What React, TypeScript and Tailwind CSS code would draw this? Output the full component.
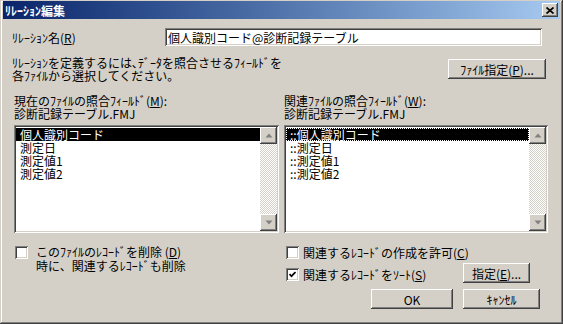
import React from "react";

const raised =
  "shadow-[inset_-1px_-1px_#404040,inset_1px_1px_#ffffff,inset_-2px_-2px_#808080,inset_2px_2px_#d4d0c8]";
const sunken =
  "shadow-[inset_1px_1px_#808080,inset_-1px_-1px_#ffffff,inset_2px_2px_#404040,inset_-2px_-2px_#d4d0c8]";

const U = ({ c }: { c: string }) => <span className="underline underline-offset-[1px]">{c}</span>;

const Btn = ({ children, className = "" }: { children: React.ReactNode; className?: string }) => (
  <button className={`flex h-[20px] items-center justify-center bg-[#d4d0c8] text-black ${raised} ${className}`}>
    {children}
  </button>
);

const CheckBox = ({ checked = false, className = "" }: { checked?: boolean; className?: string }) => (
  <div className={`flex h-[13px] w-[13px] shrink-0 items-center justify-center bg-white ${sunken} ${className}`}>
    {checked && (
      <svg width="7" height="7" viewBox="0 0 7 7">
        <polyline points="0.5,3 2.5,5.2 6.5,1" fill="none" stroke="#000" strokeWidth="1.7" />
      </svg>
    )}
  </div>
);

const Arrow = ({ down = false }: { down?: boolean }) => (
  <div className={`flex h-[17px] w-[17px] items-center justify-center bg-[#d4d0c8] ${raised}`}>
    <svg width="8" height="5" viewBox="0 0 8 5" className={down ? "rotate-180" : ""}>
      <polygon points="4,0.5 7.5,4.5 0.5,4.5" fill="#808080" />
    </svg>
  </div>
);

const ListBox = ({ items, prefix = "", focus = false }: { items: string[]; prefix?: string; focus?: boolean }) => (
  <div className={`flex h-[108px] bg-white p-[2px] ${sunken}`}>
    <div className="flex-1 pt-[1px]">
      {items.map((t, i) => (
        <div
          key={t}
          className={`h-[13px] pl-[4px] leading-[13px] ${i === 0 ? "bg-black text-white" : ""} ${
            i === 0 && focus ? "outline-1 -outline-offset-1 outline-dotted outline-white" : ""
          }`}
        >
          {prefix}
          {t}
        </div>
      ))}
    </div>
    <div className="flex w-[17px] flex-col">
      <Arrow />
      <div className="flex-1 bg-[repeating-conic-gradient(#d4d0c8_0_25%,#ffffff_0_50%)] bg-[length:2px_2px]" />
      <Arrow down />
    </div>
  </div>
);

const fields = ["個人識別コード", "測定日", "測定値1", "測定値2"];

export default function App() {
  return (
    <div
      className={`flex h-[324px] w-[563px] flex-col bg-[#d4d0c8] px-[3px] pt-[1px] font-['Noto_Sans_CJK_JP','Noto_Sans',sans-serif] text-[12px] leading-[13px] text-black shadow-[inset_-1px_-1px_#404040,inset_1px_1px_#d4d0c8,inset_-2px_-2px_#808080,inset_2px_2px_#ffffff]`}
    >
      {/* title bar */}
      <div className="flex h-[18px] items-center justify-between bg-gradient-to-r from-[#0a246a] to-[#a6caf0] pl-[2px] pr-[2px]">
        <span className="font-bold text-white">ﾘﾚｰｼｮﾝ編集</span>
        <div className={`flex h-[14px] w-[16px] items-center justify-center bg-[#d4d0c8] ${raised}`}>
          <svg width="8" height="7" viewBox="0 0 8 7">
            <path d="M0.5 0.5 L7.5 6.5 M7.5 0.5 L0.5 6.5" stroke="#000" strokeWidth="1.7" />
          </svg>
        </div>
      </div>

      {/* relation name */}
      <div className="mt-[9px] flex h-[18px] items-center">
        <span className="w-[162px] pl-[9px]">
          ﾘﾚｰｼｮﾝ名(<U c="R" />)
        </span>
        <div className={`flex h-[18px] w-[377px] items-center bg-white pl-[3px] ${sunken}`}>
          個人識別コード@診断記録テーブル
        </div>
      </div>

      {/* description */}
      <div className="mt-[10px] flex items-start justify-between">
        <div className="pl-[9px]">
          <div>ﾘﾚｰｼｮﾝを定義するには､ﾃﾞｰﾀを照合させるﾌｨｰﾙﾄﾞを</div>
          <div>各ﾌｧｲﾙから選択してください｡</div>
        </div>
        <Btn className="mr-[14px] mt-[3px] w-[98px]">
          ﾌｧｲﾙ指定(<U c="P" />)...
        </Btn>
      </div>

      {/* match fields */}
      <div className="mt-[12px] flex gap-[5px] pl-[11px]">
        <div className="w-[265px]">
          <div>
            現在のﾌｧｲﾙの照合ﾌｨｰﾙﾄﾞ(<U c="M" />):
          </div>
          <div>診断記録テーブル.FMJ</div>
          <div className="mt-[5px]">
            <ListBox items={fields} />
          </div>
        </div>
        <div className="w-[264px]">
          <div>
            関連ﾌｧｲﾙの照合ﾌｨｰﾙﾄﾞ(<U c="W" />):
          </div>
          <div>診断記録テーブル.FMJ</div>
          <div className="mt-[5px]">
            <ListBox items={fields} prefix="::" focus />
          </div>
        </div>
      </div>

      {/* options */}
      <div className="mt-[13px] flex gap-[5px] pl-[11px]">
        <div className="flex w-[265px] items-start">
          <CheckBox className="ml-[1px]" />
          <div className="ml-[8px] mt-[-1px] leading-[14px]">
            <div>
              このﾌｧｲﾙのﾚｺｰﾄﾞを削除 (<U c="D" />)
            </div>
            <div>時に、関連するﾚｺｰﾄﾞも削除</div>
          </div>
        </div>
        <div className="flex w-[264px] flex-col">
          <div className="flex h-[13px] items-center">
            <CheckBox className="ml-[2px]" />
            <span className="ml-[4px]">
              関連するﾚｺｰﾄﾞの作成を許可(<U c="C" />)
            </span>
          </div>
          <div className="mt-[4px] flex h-[20px] items-center">
            <div className="flex w-[179px] items-center pt-[2px]">
              <CheckBox checked className="ml-[2px]" />
              <span className="ml-[4px]">
                関連するﾚｺｰﾄﾞをｿｰﾄ(<U c="S" />)
              </span>
            </div>
            <Btn className="w-[67px]">
              指定(<U c="E" />)...
            </Btn>
          </div>
          <div className="mt-[6px] flex gap-[10px] pl-[87px]">
            <Btn className="w-[82px]">OK</Btn>
            <Btn className="w-[77px]">ｷｬﾝｾﾙ</Btn>
          </div>
        </div>
      </div>
    </div>
  );
}
